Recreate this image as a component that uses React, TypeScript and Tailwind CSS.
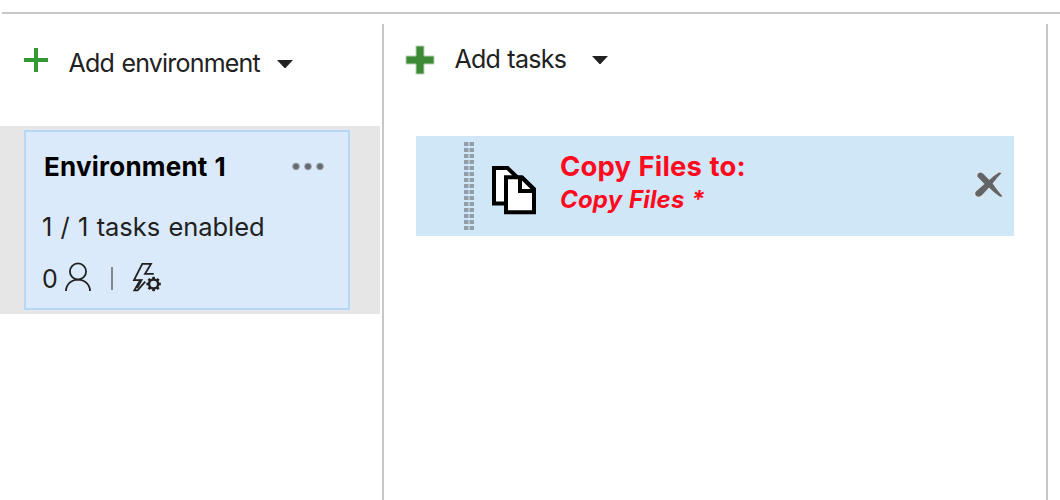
import React from "react";

const Caret = ({ className }: { className: string }) => (
  <svg className={className} width="16" height="8" viewBox="0 0 16 8" fill="#212121">
    <path d="M0 0H16L9 7.4Q8 8.4 7 7.4Z" />
  </svg>
);

const ThinPlus = () => (
  <svg className="mt-6 ml-6 shrink-0" width="24" height="24" viewBox="0 0 24 24" fill="#339933">
    <path d="M10 0H14V10H24V14H14V24H10V14H0V10H10Z" />
  </svg>
);

const BoldPlus = () => (
  <svg className="mt-[21px] ml-[21px] shrink-0" width="30" height="30" viewBox="0 0 30 30">
    <path
      d="M11 1H19V11H29V19H19V29H11V19H1V11H11Z"
      fill="#3d8b37"
      stroke="#b5d3b3"
      strokeWidth="1"
      strokeLinejoin="round"
    />
  </svg>
);

const Dots = () => (
  <svg width="34" height="12" viewBox="0 0 34 12" fill="#666b71" stroke="#a3abb5" strokeWidth="1">
    <circle cx="5" cy="5.5" r="3.4" />
    <circle cx="17" cy="5.5" r="3.4" />
    <circle cx="29" cy="5.5" r="3.4" />
  </svg>
);

const Person = () => (
  <svg className="ml-[7px]" width="26" height="30" viewBox="0 0 26 30" fill="none" stroke="#212121" strokeWidth="1.8">
    <circle cx="13" cy="9.5" r="8.1" />
    <path d="M1 29C1 22.5 6.3 17.6 13 17.6S25 22.5 25 29" />
  </svg>
);

const TEETH = [0, 45, 90, 135, 180, 225, 270, 315];

const Trigger = () => (
  <svg className="ml-[19px]" width="30" height="30" viewBox="0 0 30 30" fill="none" stroke="#212121" strokeWidth="1.8">
    <path d="M21.8 11.8H13L19 1.9H10.3L2 18.1H8.2L2.3 28.4H5.6L13.2 19.6" />
    <path d="M7.6 18.6 9.4 18.2 5.2 26" />
    <circle cx="21.6" cy="22" r="4.5" strokeWidth="2.4" />
    {TEETH.map((a) => (
      <path key={a} d="M21.6 17V14.8" strokeWidth="2.7" transform={`rotate(${a} 21.6 22)`} />
    ))}
  </svg>
);

const Grip = () => (
  <svg className="mt-[6px] ml-12 shrink-0" width="10" height="90" viewBox="0 0 10 90">
    <defs>
      <pattern id="grip" width="6" height="6" patternUnits="userSpaceOnUse">
        <path d="M0 0H6V4H0Z" fill="#b3c5d1" />
        <path d="M0 0H4V4H0Z" fill="#929fa8" />
      </pattern>
    </defs>
    <path d="M0 0H10V90H0Z" fill="url(#grip)" />
  </svg>
);

const CopyIcon = () => (
  <svg className="mt-[29px] ml-[17px] shrink-0" width="46" height="50" viewBox="0 0 46 50" stroke="#000" strokeWidth="4" fill="#fff">
    <path d="M3 3H16.5L26 12V38.5H3Z" />
    <path d="M15 12.2H30.8L43 24.2V47.2H15Z" />
    <path d="M29 12V26H43" fill="none" />
    <path d="M31 14.5 41 24H31Z" stroke="none" />
    <path d="M30.5 12.2 43 24.5" fill="none" />
  </svg>
);

const Cross = () => (
  <svg className="mt-[32px] mr-[8px] ml-auto shrink-0" width="34" height="34" viewBox="0 0 34 34">
    <path
      d="M5.5 8Q5 4 8.5 4.2 10 4.5 11 6L17 12.5Q22 7 27 4H30Q25 9 20.5 15.5 25 22 31.5 29 23 25 17 19L10 27Q7 30.5 4.5 28.5 1.5 26.5 4 23.5L12.5 16Z"
      fill="#e0e5e9"
      stroke="#e0e5e9"
      strokeWidth="1.5"
      strokeLinejoin="round"
    />
    <path
      d="M5.4 8.4Q5 5 8.2 4.5 10 4.5 11.4 6L17.3 12Q22 7.5 27 4.6L29.6 4.9Q25 9.5 20.6 15.5 24.5 21.5 30.4 28.2 29 29.5 27 28 22 24.5 17 19.4L10.4 26.8Q7 30 4.5 28 2 26 4.2 23.2L12.5 16Z"
      fill="#626466"
    />
  </svg>
);

export default function App() {
  return (
    <main className="flex h-[500px] w-[1060px] flex-col overflow-hidden bg-white pt-3 font-['Inter',sans-serif] text-[25px] text-[#212121]">
      <div className="ml-0.5 h-0.5 shrink-0 bg-[#c8c8c8]" />
      <div className="mt-2.5 flex flex-1">
        <aside className="w-[382px] shrink-0">
          <button className="flex h-[102px] w-full items-start whitespace-nowrap">
            <ThinPlus />
            <span className="mt-6 ml-[20.5px] w-[191px] text-left leading-[30px] tracking-[-0.8px] [word-spacing:1.2px]">Add environment</span>
            <Caret className="mt-9 ml-[17.5px]" />
          </button>
          <div className="h-[188px] w-[380px] bg-[#e6e6e6] pt-1 pl-6">
            <section className="h-[180px] w-[326px] border-2 border-[#b5d7f8] bg-[#dbeafa] whitespace-nowrap">
              <div className="mt-5 flex h-[30px] items-center justify-between pr-[23px] pl-[18px]">
                <h2 className="text-[26px] leading-[30px] font-bold tracking-[0.22px] [word-spacing:0.5px] text-black">Environment 1</h2>
                <Dots />
              </div>
              <p className="mt-[30px] ml-4 text-[25.5px] leading-[30px] tracking-[-0.06px] [word-spacing:1.2px]">1 / 1 tasks enabled</p>
              <div className="mt-[20px] ml-4 flex h-[30px] items-start">
                <span className="mt-[2px] w-4 leading-[30px]">0</span>
                <Person />
                <span className="mt-[5px] ml-[20px] h-[23px] w-0.5 bg-[#85878a]" />
                <Trigger />
              </div>
            </section>
          </div>
        </aside>
        <section className="w-[666px] shrink-0 border-x-2 border-[#c8c8c8]">
          <button className="flex h-28 w-full items-start whitespace-nowrap">
            <BoldPlus />
            <span className="mt-5 ml-[19.5px] w-[112px] text-left leading-[30px] tracking-[-0.72px] [word-spacing:0.8px]">Add tasks</span>
            <Caret className="mt-8 ml-[25.5px]" />
          </button>
          <div className="ml-8 flex h-[100px] w-[598px] items-start bg-[#d0e7f7] whitespace-nowrap">
            <Grip />
            <CopyIcon />
            <div className="mt-[15px] ml-[23px] font-bold text-[#ff0a1e]">
              <div className="text-[27.5px] leading-[30px] tracking-[0.15px] [word-spacing:0.7px]">Copy Files to:</div>
              <div className="mt-[4px] text-[24px] leading-[30px] tracking-[0.15px] italic [word-spacing:1px]">Copy Files *</div>
            </div>
            <Cross />
          </div>
        </section>
      </div>
    </main>
  );
}
